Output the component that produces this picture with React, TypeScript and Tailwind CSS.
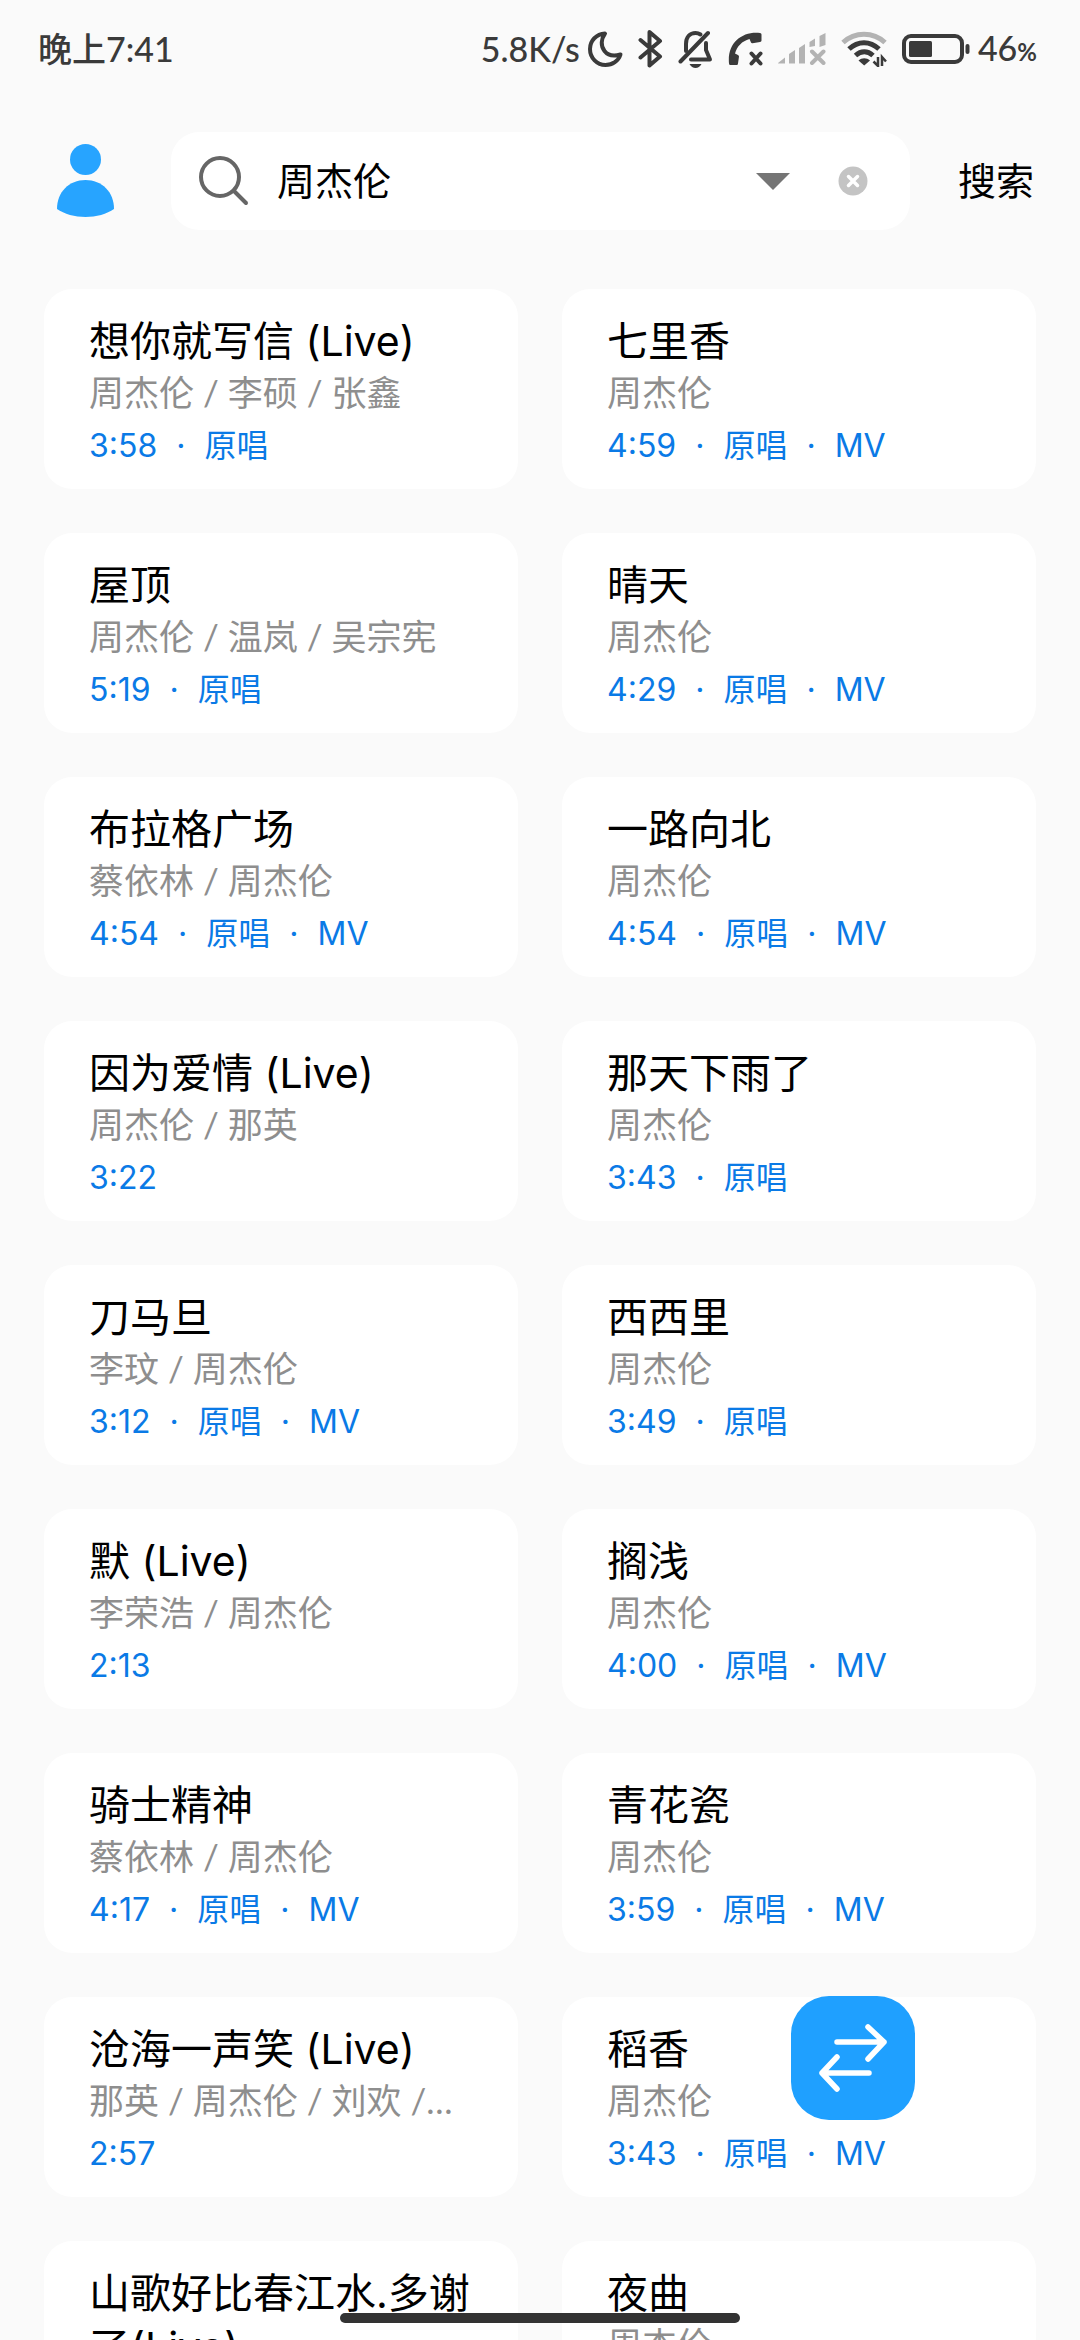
import React, { useState } from "react";

interface Song {
  title: string;
  artist: string;
  meta: string[];
}

const songs: Song[] = [
  { title: "想你就写信 (Live)", artist: "周杰伦 / 李硕 / 张鑫", meta: ["3:58", "原唱"] },
  { title: "七里香", artist: "周杰伦", meta: ["4:59", "原唱", "MV"] },
  { title: "屋顶", artist: "周杰伦 / 温岚 / 吴宗宪", meta: ["5:19", "原唱"] },
  { title: "晴天", artist: "周杰伦", meta: ["4:29", "原唱", "MV"] },
  { title: "布拉格广场", artist: "蔡依林 / 周杰伦", meta: ["4:54", "原唱", "MV"] },
  { title: "一路向北", artist: "周杰伦", meta: ["4:54", "原唱", "MV"] },
  { title: "因为爱情 (Live)", artist: "周杰伦 / 那英", meta: ["3:22"] },
  { title: "那天下雨了", artist: "周杰伦", meta: ["3:43", "原唱"] },
  { title: "刀马旦", artist: "李玟 / 周杰伦", meta: ["3:12", "原唱", "MV"] },
  { title: "西西里", artist: "周杰伦", meta: ["3:49", "原唱"] },
  { title: "默 (Live)", artist: "李荣浩 / 周杰伦", meta: ["2:13"] },
  { title: "搁浅", artist: "周杰伦", meta: ["4:00", "原唱", "MV"] },
  { title: "骑士精神", artist: "蔡依林 / 周杰伦", meta: ["4:17", "原唱", "MV"] },
  { title: "青花瓷", artist: "周杰伦", meta: ["3:59", "原唱", "MV"] },
  { title: "沧海一声笑 (Live)", artist: "那英 / 周杰伦 / 刘欢 /…", meta: ["2:57"] },
  { title: "稻香", artist: "周杰伦", meta: ["3:43", "原唱", "MV"] },
  { title: "山歌好比春江水.多谢了(Live)", artist: "", meta: [] },
  { title: "夜曲", artist: "周杰伦", meta: [] },
];

function StatusBar() {
  return (
    <div className="flex h-[98px] shrink-0 items-center justify-between pl-[38px] pr-[43px] font-['Lato','Noto_Sans_CJK_SC',sans-serif] text-[34px] font-medium leading-none text-[#3a3a3a]">
      <span>晚上7:41</span>
      <div className="flex items-center gap-2">
        <span>5.8K/s</span>
        <div className="flex items-center gap-[15px]">
          {/* moon */}
          <svg width="35" height="36" viewBox="0 0 35 36" fill="none" stroke="currentColor" strokeWidth="4" strokeLinejoin="round">
            <path d="M17 2.500C8.500 3 2 9.500 2 18c0 9 7 16 15.500 16C24.500 34 30.500 30 32.500 23.500C26 25.500 20 24.500 16.500 20C12.500 15 13 8 17 2.500Z" />
          </svg>
          {/* bluetooth */}
          <svg width="25" height="40" viewBox="0 0 25 40" fill="none" stroke="currentColor" strokeWidth="4" strokeLinecap="round" strokeLinejoin="round">
            <path d="M2.500 11L22 27.500L11.500 36.500V3L22 12L2.500 28.500" />
          </svg>
          {/* muted bell */}
          <svg width="35" height="38" viewBox="0 0 35 38" fill="none" stroke="currentColor" strokeWidth="4" strokeLinecap="round">
            <path d="M2.500 31.500L30 3" />
            <path d="M8 21V14C8 7 12 3 17.500 3C19.500 3 21 3.500 22.500 4.500" />
            <path d="M28 13V20L32 29.500H13" strokeLinejoin="round" />
            <path d="M11.500 34H23.500C22 36.500 20 38 17.500 38S13 36.500 11.500 34Z" fill="currentColor" stroke="none" />
          </svg>
          {/* failed call */}
          <svg width="35" height="34" viewBox="0 0 35 34" fill="none">
            <path d="M32 1C14 -1 -1 11 1 31.500Q1 33 2.500 33H8.500Q10 33 10 31.500L11 24.500Q11 23.500 10 23L7 21.500C9 14.500 14 9 21.500 7L23 10.500Q23.500 11.500 24.500 11.300L32 10Q33.500 9.800 33.500 8.500V2.500Q33.500 1 32 1Z" fill="currentColor" />
            <path d="M23.500 21.500L32.500 31.500M32.500 21.500L23.500 31.500" stroke="currentColor" strokeWidth="4" strokeLinecap="round" />
          </svg>
          {/* no signal */}
          <svg width="48" height="32" viewBox="0 0 48 32" fill="#b3b3b3">
            <path d="M0 30L7 24.500V30.500H1Q0 30.500 0 30ZM11 21L17 17V30.500H11ZM21 15L27 11V30.500H21ZM31.500 9L37 5.500V13L31.500 14ZM41.500 3L47.500 0V12L41.500 14Z" />
            <path d="M34 18.500L45.500 30M45.500 18.500L34 30" stroke="#b3b3b3" strokeWidth="4" strokeLinecap="round" />
          </svg>
          {/* wifi */}
          <svg width="46" height="36" viewBox="0 0 46 36" fill="none">
            <path d="M2 11.500C14 0.500 32 0.500 44 11.500" stroke="#b3b3b3" strokeWidth="5" />
            <path d="M8 18C17 9.500 29 9.500 38 18" stroke="currentColor" strokeWidth="5" />
            <path d="M14.500 24.500C20 19.500 26.500 19.500 32 24.500" stroke="currentColor" strokeWidth="5" />
            <path d="M17.500 29.500C21 26.500 25.500 26.500 29 29.500L23.200 34.500Z" fill="currentColor" />
            <path d="M37 26V35L32.500 30.500M41 35V26L45 30.500" stroke="currentColor" strokeWidth="2.500" />
          </svg>
          {/* battery */}
          <svg width="68" height="30" viewBox="0 0 68 30" fill="none">
            <rect x="2" y="2" width="58" height="26" rx="7" stroke="currentColor" strokeWidth="4" />
            <rect x="7" y="7" width="23" height="16" rx="1.500" fill="currentColor" />
            <path d="M65.500 12V18" stroke="currentColor" strokeWidth="4" strokeLinecap="round" />
          </svg>
        </div>
        <span>
          46<span className="text-2xl font-bold">%</span>
        </span>
      </div>
    </div>
  );
}

function SongCard({ song }: { song: Song }) {
  return (
    <li className="min-h-[200px] rounded-[28px] bg-white px-[45px] pt-[25px] pb-3">
      <h2 className="text-[41px] leading-[54px] text-black">{song.title}</h2>
      <p className="truncate font-['Lato','Noto_Sans_CJK_SC',sans-serif] text-[35px] leading-[48px] text-[#8e8e8e]">
        {song.artist}
      </p>
      <p className="flex text-[32px] leading-[60px] text-[#0a7ae6]">
        {song.meta.map((item, idx) => (
          <React.Fragment key={`meta-${idx}`}>
            {idx > 0 && <span className="mx-[19px]">·</span>}
            <span>{item}</span>
          </React.Fragment>
        ))}
      </p>
    </li>
  );
}

export default function App() {
  const [query, setQuery] = useState("周杰伦");

  const handleSubmit = (e: React.FormEvent) => {
    e.preventDefault();
  };

  return (
    <div className="relative flex h-screen flex-col overflow-hidden bg-[#fafafa] font-['Inter','Noto_Sans_CJK_SC',sans-serif]">
      <StatusBar />

      <form
        onSubmit={handleSubmit}
        className="flex shrink-0 items-center pt-[34px] pr-[46px] pb-[59px] pl-[57px]"
      >
        <button type="button" aria-label="我的" className="shrink-0">
          <svg width="57" height="74" viewBox="0 0 57 74" fill="#27a4ff">
            <circle cx="28.500" cy="15.500" r="15.500" />
            <path d="M0 65C0 48 12 36 28.500 36S57 48 57 65C50 70 39 73 28.500 73S7 70 0 65Z" />
          </svg>
        </button>

        <div className="ml-[57px] flex h-[98px] min-w-0 flex-1 items-center rounded-[28px] bg-white pr-[42px] pl-7">
          <svg width="50" height="50" viewBox="0 0 50 50" fill="none" stroke="#666666" strokeWidth="4" strokeLinecap="round" className="shrink-0">
            <circle cx="21" cy="21" r="19" />
            <path d="M35 35L47 47" />
          </svg>
          <input
            type="text"
            aria-label="搜索歌曲"
            value={query}
            onChange={(e) => setQuery(e.target.value)}
            className="ml-7 min-w-0 flex-1 bg-transparent text-[38px] text-black outline-none"
          />
          <button type="button" aria-label="展开" className="shrink-0">
            <svg width="34" height="17" viewBox="0 0 34 17" fill="#757575">
              <path d="M0 0H34L17 17Z" />
            </svg>
          </button>
          <button
            type="button"
            aria-label="清除"
            onClick={() => setQuery("")}
            className="ml-12 shrink-0"
          >
            <svg width="30" height="30" viewBox="0 0 30 30" fill="none">
              <circle cx="15" cy="15" r="14.500" fill="#c4c4c4" />
              <path d="M10.500 10.500L19.500 19.500M19.500 10.500L10.500 19.500" stroke="#ffffff" strokeWidth="3.500" strokeLinecap="round" />
            </svg>
          </button>
        </div>

        <button type="submit" className="ml-12 shrink-0 text-[38px] text-black">
          搜索
        </button>
      </form>

      <ul className="grid min-h-0 flex-1 auto-rows-max grid-cols-2 gap-11 overflow-y-auto px-11 [scrollbar-width:none]">
        {songs.map((song, idx) => (
          <SongCard key={`song-${idx}`} song={song} />
        ))}
      </ul>

      <button
        type="button"
        aria-label="切换"
        className="absolute right-[165px] bottom-[220px] flex h-[124px] w-[124px] items-center justify-center rounded-[38px] bg-[#1fa0ff]"
      >
        <svg width="68" height="68" viewBox="0 0 68 68" fill="none" stroke="#ffffff" strokeWidth="5.500" strokeLinecap="round" strokeLinejoin="round">
          <path d="M18 18H65M49 3L65 18L49 35" />
          <path d="M50 49H3M18 33L3 49L18 65" />
        </svg>
      </button>

      <div className="absolute bottom-[17px] left-1/2 h-[10px] w-[400px] -translate-x-1/2 rounded-full bg-[#333333]" />
    </div>
  );
}
